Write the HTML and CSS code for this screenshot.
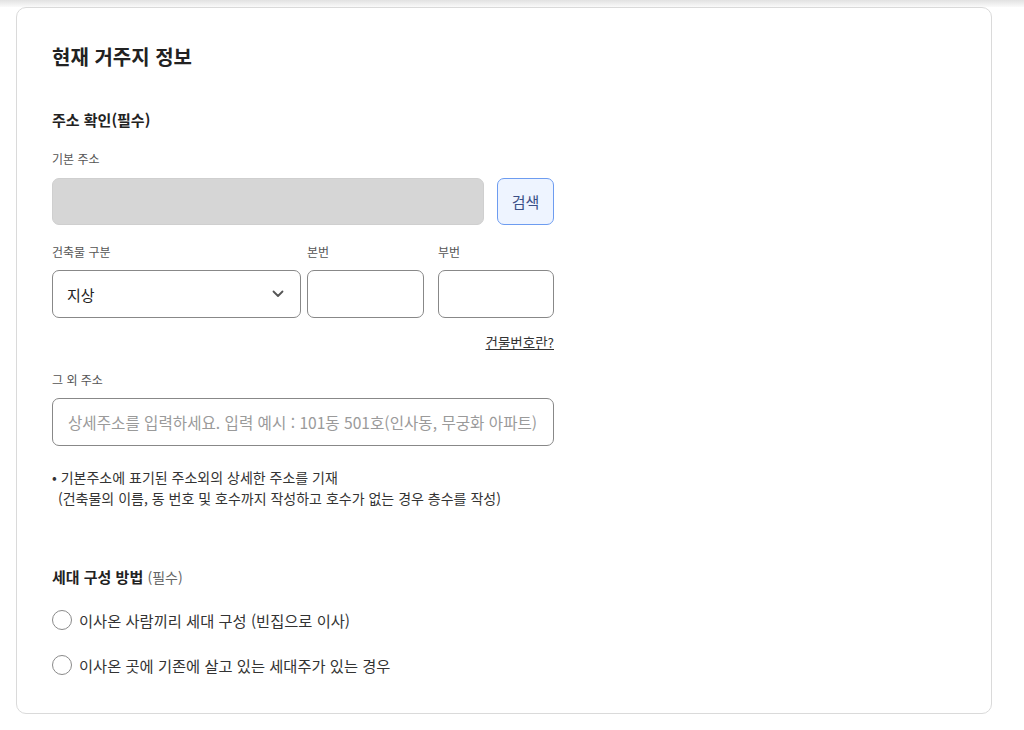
FILE: index.html
```html
<!DOCTYPE html>
<html lang="ko">
<head>
<meta charset="utf-8">
<title>현재 거주지 정보</title>
<link rel="stylesheet" href="styles.css">
</head>
<body>
<div class="topshade"></div>
<section class="card">
  <h1 class="title">현재 거주지 정보</h1>
  <h2 class="section-head">주소 확인(필수)</h2>

  <div class="label lb-base">기본 주소</div>
  <div class="row-search">
    <div class="field-disabled"></div>
    <button class="btn-search" type="button">검색</button>
  </div>

  <div class="row-bld">
    <div class="col col-type">
      <div class="label">건축물 구분</div>
      <div class="select">
        <span>지상</span>
        <svg class="chev" width="12" height="8" viewBox="0 0 12 8"><path d="M1.5 1.5 L6 6 L10.5 1.5" fill="none" stroke="#555" stroke-width="1.8" stroke-linecap="round" stroke-linejoin="round"/></svg>
      </div>
    </div>
    <div class="col col-main">
      <div class="label">본번</div>
      <div class="box"></div>
    </div>
    <div class="col col-sub">
      <div class="label">부번</div>
      <div class="box"></div>
    </div>
  </div>

  <div class="link-row"><a class="link">건물번호란?</a></div>

  <div class="label lb-etc">그 외 주소</div>
  <div class="field">상세주소를 입력하세요. 입력 예시 : 101동 501호(인사동, 무궁화 아파트)</div>

  <p class="note">• 기본주소에 표기된 주소외의 상세한 주소를 기재<br><span class="indent">(건축물의 이름, 동 번호 및 호수까지 작성하고 호수가 없는 경우 층수를 작성)</span></p>

  <h2 class="section-head hh">세대 구성 방법 <span class="req">(필수)</span></h2>

  <div class="radios">
    <label class="radio"><span class="circle"></span>이사온 사람끼리 세대 구성 (빈집으로 이사)</label>
    <label class="radio"><span class="circle"></span>이사온 곳에 기존에 살고 있는 세대주가 있는 경우</label>
  </div>
</section>
</body>
</html>
```

FILE: styles.css
```css
* { box-sizing: border-box; }
html, body { margin: 0; padding: 0; background: #fff; }
body {
  font-family: "Noto Sans CJK KR", "Noto Sans", sans-serif;
  color: #222;
  width: 1024px;
  height: 730px;
  overflow: hidden;
}
.topshade {
  height: 7px;
  background: linear-gradient(#e2e2e2, #fafafa);
}
.card {
  margin: 0 32px 0 16px;
  height: 707px;
  border: 1px solid #dadada;
  border-radius: 10px;
  padding: 35px 35px 0;
  display: flex;
  flex-direction: column;
  align-items: flex-start;
}
.title {
  margin: 0;
  font-size: 20px;
  line-height: 28px;
  font-weight: 700;
  color: #222;
}
.section-head {
  margin: 38px 0 0;
  font-size: 15px;
  line-height: 22px;
  font-weight: 700;
  color: #222;
}
.label {
  font-size: 12px;
  line-height: 18px;
  color: #555;
}
.lb-base { margin-top: 19px; }
.row-search {
  margin-top: 10px;
  width: 502px;
  display: flex;
  gap: 13px;
}
.field-disabled {
  width: 432px;
  height: 47px;
  background: #d6d6d6;
  border: 1px solid #cfcfcf;
  border-radius: 7px;
}
.btn-search {
  width: 57px;
  height: 47px;
  background: #eef4ff;
  border: 1px solid #6d9cf0;
  border-radius: 7px;
  font-family: inherit;
  font-size: 15px;
  color: #3a4f86;
  padding: 0;
}
.row-bld {
  margin-top: 18px;
  width: 502px;
  display: flex;
}
.col {
  display: flex;
  flex-direction: column;
  gap: 9px;
}
.col-type { width: 249px; }
.col-main { width: 117px; margin-left: 6px; }
.col-sub { width: 116px; margin-left: 14px; }
.select {
  height: 48px;
  border: 1px solid #888;
  border-radius: 7px;
  display: flex;
  align-items: center;
  justify-content: space-between;
  padding: 0 16px 0 14px;
  font-size: 15px;
  color: #222;
}
.chev { display: block; }
.box {
  height: 48px;
  border: 1px solid #888;
  border-radius: 7px;
}
.link-row {
  width: 502px;
  margin-top: 15px;
  display: flex;
  justify-content: flex-end;
}
.link {
  font-size: 13.5px;
  line-height: 18px;
  color: #333;
  text-decoration: underline;
}
.lb-etc { margin-top: 20px; }
.field {
  margin-top: 9px;
  width: 502px;
  height: 48px;
  border: 1px solid #888;
  border-radius: 7px;
  padding: 0 15px;
  display: flex;
  align-items: center;
  font-size: 15.6px;
  color: #9a9a9a;
  white-space: nowrap;
}
.note {
  margin: 21px 0 0;
  font-size: 14px;
  line-height: 21px;
  color: #333;
}
.indent { padding-left: 6px; }
.hh { margin-top: 57px; }
.req {
  font-size: 14px;
  font-weight: 400;
  color: #666;
}
.radios {
  margin-top: 20px;
  display: flex;
  flex-direction: column;
  gap: 21px;
}
.radio {
  display: flex;
  align-items: center;
  gap: 7px;
  height: 24px;
  font-size: 15.3px;
  color: #333;
}
.circle {
  width: 20px;
  height: 20px;
  border: 1.5px solid #8a8a8a;
  border-radius: 50%;
  background: #fff;
}
```
